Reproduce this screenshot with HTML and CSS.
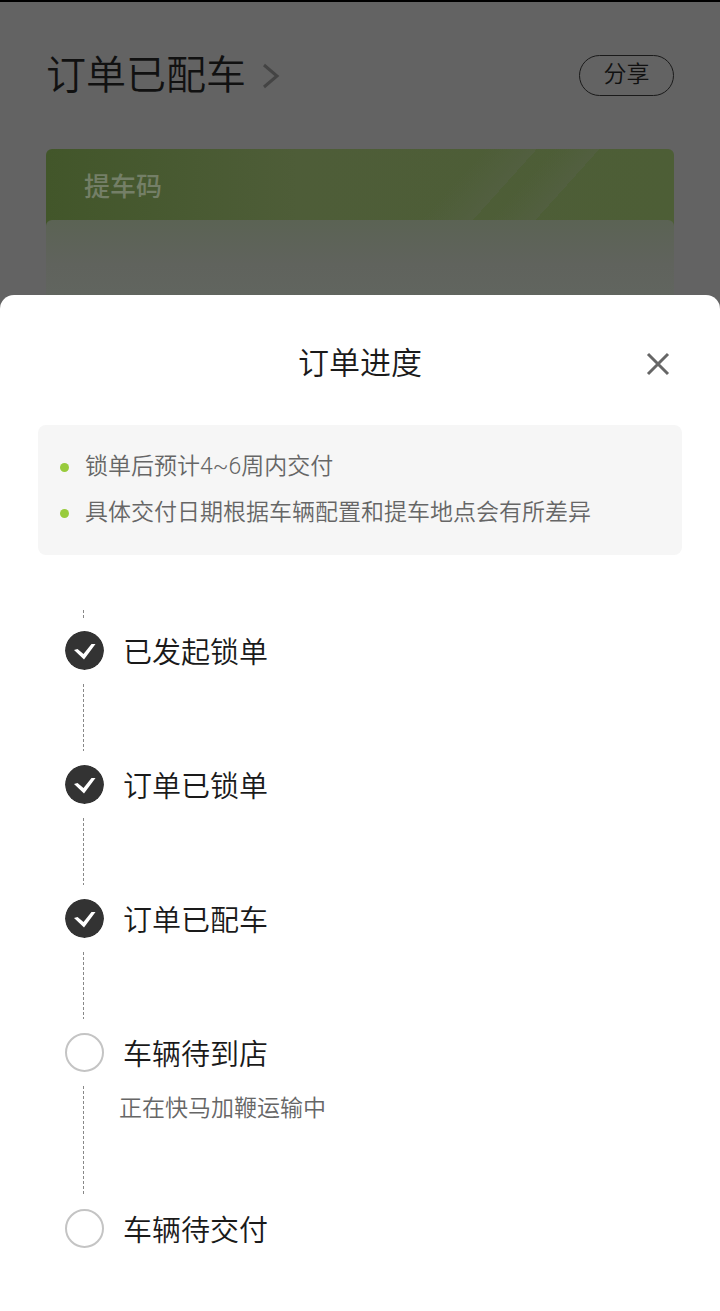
FILE: index.html
```
<!DOCTYPE html>
<html lang="zh-CN">
<head>
    <meta charset="UTF-8">
    <meta name="viewport" content="width=device-width, initial-scale=1.0">
    <title>订单进度</title>
    <link rel="stylesheet" href="styles.css">
</head>
<body>
<!-- Order page behind the sheet -->
<main class="order">
    <header class="order-header">
        <h1><a href="#progress">订单已配车
            <svg class="arrow" viewBox="0 0 18 26" aria-hidden="true"><path d="M2 2L15 13L2 24"/></svg>
        </a></h1>
        <button class="share" type="button">分享</button>
    </header>
    <section class="pickup">
        <h2>提车码</h2>
        <div class="pickup-body"></div>
    </section>
</main>

<!-- Progress sheet -->
<section class="sheet" id="progress" role="dialog" aria-labelledby="sheet-title">
    <header class="sheet-header">
        <h2 id="sheet-title">订单进度</h2>
        <button class="close" type="button" aria-label="关闭">
            <svg viewBox="0 0 24 24" aria-hidden="true"><path d="M2 2L22 22M22 2L2 22"/></svg>
        </button>
    </header>

    <ul class="notes">
        <li>锁单后预计4~6周内交付</li>
        <li>具体交付日期根据车辆配置和提车地点会有所差异</li>
    </ul>

    <div class="lead-line"></div>
    <ol class="steps">
        <li class="step done">
            <div class="track">
                <svg class="mark" viewBox="0 0 78 78" aria-hidden="true"><circle cx="39" cy="39" r="39"/><path d="M18 38L25 36L37 46L53 26H61L38 57Z"/></svg>
            </div>
            <h3>已发起锁单</h3>
        </li>
        <li class="step done">
            <div class="track">
                <svg class="mark" viewBox="0 0 78 78" aria-hidden="true"><circle cx="39" cy="39" r="39"/><path d="M18 38L25 36L37 46L53 26H61L38 57Z"/></svg>
            </div>
            <h3>订单已锁单</h3>
        </li>
        <li class="step done">
            <div class="track">
                <svg class="mark" viewBox="0 0 78 78" aria-hidden="true"><circle cx="39" cy="39" r="39"/><path d="M18 38L25 36L37 46L53 26H61L38 57Z"/></svg>
            </div>
            <h3>订单已配车</h3>
        </li>
        <li class="step">
            <div class="track"><span class="mark"></span></div>
            <div>
                <h3>车辆待到店</h3>
                <p>正在快马加鞭运输中</p>
            </div>
        </li>
        <li class="step">
            <div class="track"><span class="mark"></span></div>
            <h3>车辆待交付</h3>
        </li>
    </ol>
</section>
</body>
</html>
```

FILE: styles.css
```
* {
    box-sizing: border-box;
    margin: 0;
    padding: 0;
}
body {
    display: flex;
    flex-direction: column;
    min-height: 100vh;
    border-top: 2px solid #000;
    background-color: #636363;
    color: #1a1a1a;
    font-family: Roboto, "Noto Sans CJK SC", sans-serif;
    font-weight: 350;
}
h1, h2, h3 {
    font-weight: 350;
}
ul, ol {
    list-style: none;
}
button {
    border: none;
    background: none;
    font: inherit;
    cursor: pointer;
}

/* Order page */
.order {
    padding: 42px 46px 0;
}
.order-header {
    display: flex;
    align-items: center;
    justify-content: space-between;
    height: 62px;
}
.order-header h1 {
    font-size: 40px;
    line-height: 64px;
}
.order-header a {
    display: flex;
    align-items: center;
    gap: 16px;
    padding-top: 2px;
    color: #111;
    text-decoration: none;
}
.arrow {
    width: 18px;
    height: 26px;
    fill: none;
    stroke: #444;
    stroke-width: 3;
}
.share {
    width: 95px;
    height: 41px;
    border: 1px solid #1a1a1a;
    border-radius: 21px;
    color: #111;
    font-size: 23px;
    line-height: 38px;
}
.pickup {
    margin-top: 43px;
    border-radius: 6px 6px 0 0;
    background:
        linear-gradient(132deg, transparent 46%, #525f40 62%, transparent 62%) 290px 0 / 260px 71px no-repeat,
        linear-gradient(132deg, transparent 50%, #525f40 66%, transparent 66%) 366px 0 / 220px 71px no-repeat,
        linear-gradient(90deg, #42562a, #4e5d38 40%, #4d5e36);
}
.pickup h2 {
    padding: 5px 0 0 38px;
    color: #747f67;
    font-size: 26px;
    font-weight: 500;
    line-height: 66px;
}
.pickup-body {
    height: 75px;
    border-radius: 6px 6px 0 0;
    background: linear-gradient(#5b6354, #60635d 60%, #61655f);
}

/* Progress sheet */
.sheet {
    flex: 1;
    padding: 37px 38px 56px;
    border-radius: 14px 14px 0 0;
    background-color: #fff;
}
.sheet-header {
    display: grid;
    grid-template-columns: 48px 1fr 48px;
    align-items: center;
}
.sheet-header h2 {
    grid-column: 2;
    font-size: 31px;
    line-height: 64px;
    text-align: center;
}
.close {
    height: 48px;
}
.close svg {
    display: block;
    width: 24px;
    height: 24px;
    margin: 0 auto;
    fill: none;
    stroke: #666;
    stroke-width: 3;
}
.notes {
    margin-top: 29px;
    padding: 19px 22px;
    border-radius: 8px;
    background-color: #f6f6f6;
    color: #666;
    font-size: 23px;
    line-height: 46px;
}
.notes li {
    display: flex;
    align-items: center;
    gap: 16px;
}
.notes li::before {
    content: "";
    width: 9px;
    height: 9px;
    border-radius: 50%;
    background-color: #98cb3c;
}

/* Steps */
.lead-line, .step:not(:last-child) .track::after {
    width: 1px;
    background: repeating-linear-gradient(#888 0 3px, transparent 3px 5px);
}
.lead-line {
    height: 8px;
    margin: 55px 0 13px 45px;
}
.steps {
    padding-left: 27px;
}
.step {
    display: flex;
    gap: 19px;
    min-height: 134px;
}
.step:last-child {
    min-height: 0;
}
.track {
    display: flex;
    flex-direction: column;
    align-items: center;
}
.mark {
    width: 39px;
    height: 39px;
    border: 2px solid #c4c4c4;
    border-radius: 50%;
}
.done .mark {
    border: none;
    fill: #333;
}
.mark path {
    fill: #fff;
}
.step:not(:last-child) .track::after {
    content: "";
    flex: 1;
    margin: 14px 2px 14px 0;
}
.step h3 {
    font-size: 29px;
    line-height: 44px;
}
.step p {
    margin: 12px 0 80px -4px;
    color: #666;
    font-size: 23px;
    line-height: 40px;
}
```
